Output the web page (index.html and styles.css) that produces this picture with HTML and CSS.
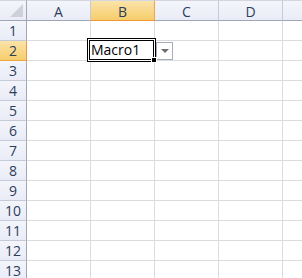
FILE: index.html
```html
<!DOCTYPE html>
<html lang="en">
<head>
  <meta charset="UTF-8">
  <title>Sheet</title>
  <link rel="stylesheet" href="styles.css">
</head>
<body>
  <!-- === SHEET GRID === -->
  <div class="sheet">
    <div class="corner"><span class="tri"></span></div>
    <div class="col-head">A</div>
    <div class="col-head active">B</div>
    <div class="col-head">C</div>
    <div class="col-head">D</div>
    <div class="col-head"></div>

    <div class="row-head">1</div>
    <div class="cell"></div><div class="cell"></div><div class="cell"></div><div class="cell"></div><div class="cell"></div>

    <div class="row-head active">2</div>
    <div class="cell"></div>
    <div class="cell editing">
      <div class="editor">Macro1<span class="handle"></span></div>
      <div class="drop"><span class="arrow"></span></div>
    </div>
    <div class="cell"></div><div class="cell"></div><div class="cell"></div>

    <div class="row-head">3</div>
    <div class="cell"></div><div class="cell"></div><div class="cell"></div><div class="cell"></div><div class="cell"></div>
    <div class="row-head">4</div>
    <div class="cell"></div><div class="cell"></div><div class="cell"></div><div class="cell"></div><div class="cell"></div>
    <div class="row-head">5</div>
    <div class="cell"></div><div class="cell"></div><div class="cell"></div><div class="cell"></div><div class="cell"></div>
    <div class="row-head">6</div>
    <div class="cell"></div><div class="cell"></div><div class="cell"></div><div class="cell"></div><div class="cell"></div>
    <div class="row-head">7</div>
    <div class="cell"></div><div class="cell"></div><div class="cell"></div><div class="cell"></div><div class="cell"></div>
    <div class="row-head">8</div>
    <div class="cell"></div><div class="cell"></div><div class="cell"></div><div class="cell"></div><div class="cell"></div>
    <div class="row-head">9</div>
    <div class="cell"></div><div class="cell"></div><div class="cell"></div><div class="cell"></div><div class="cell"></div>
    <div class="row-head">10</div>
    <div class="cell"></div><div class="cell"></div><div class="cell"></div><div class="cell"></div><div class="cell"></div>
    <div class="row-head">11</div>
    <div class="cell"></div><div class="cell"></div><div class="cell"></div><div class="cell"></div><div class="cell"></div>
    <div class="row-head">12</div>
    <div class="cell"></div><div class="cell"></div><div class="cell"></div><div class="cell"></div><div class="cell"></div>
    <div class="row-head">13</div>
    <div class="cell"></div><div class="cell"></div><div class="cell"></div><div class="cell"></div><div class="cell"></div>
  </div>
</body>
</html>
```

FILE: styles.css
```css
body {
  margin: 0;
  background: #ffffff;
  font-family: "Open Sans", "Liberation Sans", sans-serif;
  overflow: hidden;
}

.sheet {
  display: grid;
  grid-template-columns: 27px repeat(5, 64px);
  grid-template-rows: 21px repeat(13, 20px);
}

.sheet > div {
  box-sizing: border-box;
}

.corner,
.col-head,
.row-head {
  background: linear-gradient(#f4f5fb, #e9ecf7);
  color: #2c3e5a;
  font-size: 14px;
  display: flex;
  align-items: center;
  justify-content: center;
  border-right: 1px solid #c5c9d8;
  border-bottom: 1px solid #9ea6b8;
}

.col-head {
  border-top: 1px solid #d4d7e2;
  padding-top: 1px;
}

.corner {
  position: relative;
  border-top: 1px solid #d4d7e2;
  border-right: 1px solid #9ea6b8;
}

.tri {
  position: absolute;
  right: 3px;
  bottom: 3px;
  width: 0;
  height: 0;
  border-left: 13px solid transparent;
  border-bottom: 13px solid #cdd0d8;
}

.row-head {
  border-right: 1px solid #9ea6b8;
  border-bottom: 1px solid #c5c9d8;
}

.col-head.active {
  background: linear-gradient(#fbe3a9, #f5cd6c);
  border-right: 1px solid #f0a640;
  border-bottom: 1px solid #f29536;
}

.row-head.active {
  background: linear-gradient(#fbe3a9, #f5cd6c);
  border-bottom: 1px solid #f0a640;
  border-right: 1px solid #f29536;
}

.cell {
  background: #fff;
  border-right: 1px solid #dadcdd;
  border-bottom: 1px solid #dadcdd;
}

.editing {
  position: relative;
}

.editor {
  position: absolute;
  left: -2px;
  top: -1px;
  width: 62px;
  height: 18px;
  border: 1px solid #000;
  outline: 1px solid #fff;
  box-shadow: 0 0 0 2px #000;
  background: #fff;
  font-size: 14px;
  line-height: 18px;
  color: #000;
  padding-left: 1px;
  z-index: 2;
}

.handle {
  position: absolute;
  right: -4px;
  bottom: -4px;
  width: 4px;
  height: 4px;
  background: #000;
  border: 1px solid #fff;
}

.drop {
  position: absolute;
  left: 65px;
  top: 1px;
  width: 17px;
  height: 18px;
  box-sizing: border-box;
  border: 1px solid #a7adbb;
  background: #fff;
  display: flex;
  align-items: center;
  justify-content: center;
  z-index: 1;
}

.arrow {
  width: 0;
  height: 0;
  border-left: 4px solid transparent;
  border-right: 4px solid transparent;
  border-top: 4px solid #6d6d6d;
}
```
